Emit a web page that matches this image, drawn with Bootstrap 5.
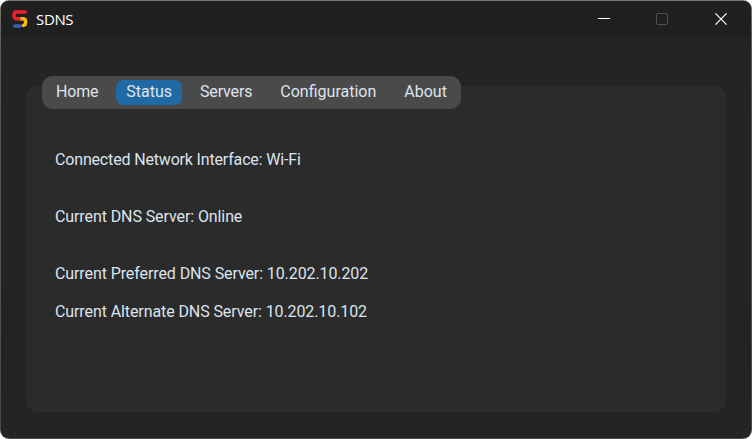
<!DOCTYPE html>
<html lang="en">
<head>
<meta charset="utf-8">
<meta name="viewport" content="width=device-width, initial-scale=1">
<title>SDNS</title>
<link href="https://cdn.jsdelivr.net/npm/bootstrap@5.3.0/dist/css/bootstrap.min.css" rel="stylesheet">
<style>
  html, body { height: 100%; }
  html { background: #fff; }
  body { background: linear-gradient(#77766a 0, #55595a 60px, #454d50 100%); border-radius: 9px; padding: 1px; font-family: Roboto, sans-serif; font-size: 16px; overflow: hidden; }
  .app-window { background: #242424; border-radius: 8px; color: #dce4ee; }
  .title-bar { height: 37px; padding: 0 1px 2px 0; background: #202020; color: #fff; }
  .app-title { font-family: "Open Sans", sans-serif; font-size: 15px; line-height: 20px; letter-spacing: -.35px; margin-left: 8px; }
  .app-logo { margin: 1px 0 0 10px; }
  .win-btn { width: 58.5px; height: 35px; color: #fff; }
  .win-btn:disabled { color: #505050; border: 0; opacity: 1; }
  .tab-panel { margin: 48px 25px 26px; background: #2b2b2b; border-radius: 11px; }
  .tab-strip { margin: -10px 0 0 16px; width: 419px; height: 33px; padding: 4px; gap: 8px; background: #4a4a4a; border-radius: 11px; }
  .tab-strip .nav-link { height: 25px; line-height: 23px; padding: 0 10px; color: #dce4ee; border-radius: 7px; white-space: nowrap; }
  .tab-strip .nav-link:first-child { letter-spacing: -.2px; }
  .tab-strip .nav-link.active { background: #1f6aa5; color: #dce4ee; }
  .tab-strip .tab-tight { letter-spacing: -.15px; }
  .status-lines { padding: 41px 29px 0; line-height: 19px; letter-spacing: -.095px; }
  .line-gap { margin-bottom: 38px; }
  .line-gap-sm { margin-bottom: 19px; }
  .line-tight { letter-spacing: -.165px; }
</style>
</head>
<body>
<div class="app-window d-flex flex-column h-100 overflow-hidden">
  <header class="title-bar d-flex align-items-center flex-shrink-0">
    <svg class="app-logo" width="17" height="18" viewBox="0 0 17 18" fill="none" stroke-width="3.5" stroke-linecap="round" stroke-linejoin="round" aria-hidden="true">
      <path d="M3.8 16H9" stroke="#3b60b5"/>
      <path d="M9 8.8H11.5Q14.6 8.8 14.6 11.5V12.5Q14.6 15 12.4 15.4" stroke="#fbb813"/>
      <path d="M14.2 2H5.5Q3 2 3 5.2T5.5 8.8H8" stroke="#ee202b"/>
    </svg>
    <span class="app-title me-auto">SDNS</span>
    <button class="win-btn btn p-0 rounded-0 d-flex align-items-center justify-content-center" aria-label="Minimize">
      <svg width="12" height="12" viewBox="0 0 12 12"><path d="M0 5.5H12" stroke="currentColor"/></svg>
    </button>
    <button class="win-btn btn p-0 rounded-0 d-flex align-items-center justify-content-center" aria-label="Maximize" disabled>
      <svg width="12" height="12" viewBox="0 0 12 12"><rect x=".5" y=".5" width="11" height="11" rx="1" fill="none" stroke="currentColor"/></svg>
    </button>
    <button class="win-btn btn p-0 rounded-0 d-flex align-items-center justify-content-center" aria-label="Close">
      <svg width="12" height="12" viewBox="0 0 12 12"><path d="M.4.4 11.6 11.6M11.6.4.4 11.6" stroke="currentColor" stroke-width="1.2"/></svg>
    </button>
  </header>
  <main class="tab-panel flex-grow-1">
    <nav class="tab-strip nav nav-pills flex-nowrap">
      <a class="nav-link" href="#">Home</a>
      <a class="nav-link active" href="#">Status</a>
      <a class="nav-link tab-tight" href="#">Servers</a>
      <a class="nav-link" href="#">Configuration</a>
      <a class="nav-link" href="#">About</a>
    </nav>
    <section class="status-lines">
      <p class="line-gap line-tight">Connected Network Interface: Wi-Fi</p>
      <p class="line-gap">Current DNS Server: Online</p>
      <p class="line-gap-sm">Current Preferred DNS Server: 10.202.10.202</p>
      <p class="mb-0">Current Alternate DNS Server: 10.202.10.102</p>
    </section>
  </main>
</div>
<script src="https://cdn.jsdelivr.net/npm/bootstrap@5.3.0/dist/js/bootstrap.bundle.min.js"></script>
</body>
</html>
